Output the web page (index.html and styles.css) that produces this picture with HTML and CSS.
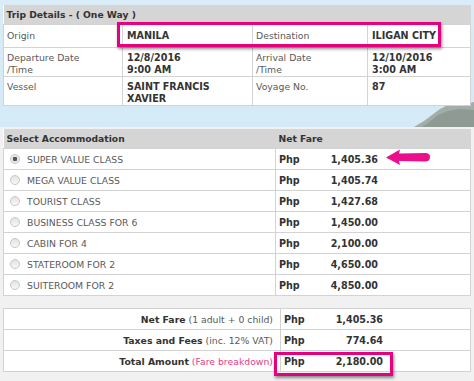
FILE: index.html
```html
<!DOCTYPE html>
<html lang="en">

<head>
    <meta charset="UTF-8">
    <meta name="viewport" content="width=device-width, initial-scale=1.0">
    <title>Trip Details</title>
    <link rel="stylesheet" href="styles.css">
</head>

<body>
    <div class="page">
        <!-- ilha no fundo -->
        <svg class="island" width="60" height="26" viewBox="0 0 60 26">
            <path d="M0 26 L10 20 L18 14 L26 8 L34 4 L44 2 L52 3 L60 1 L60 26 Z" fill="#a3ada8" />
            <path d="M14 22 L24 14 L34 10 L46 8 L60 9 L60 26 L8 26 Z" fill="#86928c" opacity="0.7" />
        </svg>

        <table class="trip">
            <colgroup>
                <col style="width:119px">
                <col style="width:130px">
                <col style="width:115px">
                <col>
            </colgroup>
            <tr>
                <th colspan="4">Trip Details - ( One Way )</th>
            </tr>
            <tr class="r1">
                <td>Origin</td>
                <td class="val">MANILA</td>
                <td>Destination</td>
                <td class="val">ILIGAN CITY</td>
            </tr>
            <tr class="r2">
                <td>Departure Date<br>/Time</td>
                <td class="val">12/8/2016<br>9:00 AM</td>
                <td>Arrival Date<br>/Time</td>
                <td class="val">12/10/2016<br>3:00 AM</td>
            </tr>
            <tr class="r3">
                <td>Vessel</td>
                <td class="val">SAINT FRANCIS<br>XAVIER</td>
                <td>Voyage No.</td>
                <td class="val">87</td>
            </tr>
        </table>

        <table class="accom">
            <tr>
                <th class="name">Select Accommodation</th>
                <th>Net Fare</th>
            </tr>
            <tr>
                <td class="name"><span class="radio checked"></span>SUPER VALUE CLASS</td>
                <td><span class="cur">Php</span><span class="amt">1,405.36</span></td>
            </tr>
            <tr>
                <td class="name"><span class="radio"></span>MEGA VALUE CLASS</td>
                <td><span class="cur">Php</span><span class="amt">1,405.74</span></td>
            </tr>
            <tr>
                <td class="name"><span class="radio"></span>TOURIST CLASS</td>
                <td><span class="cur">Php</span><span class="amt">1,427.68</span></td>
            </tr>
            <tr>
                <td class="name"><span class="radio"></span>BUSINESS CLASS FOR 6</td>
                <td><span class="cur">Php</span><span class="amt">1,450.00</span></td>
            </tr>
            <tr>
                <td class="name"><span class="radio"></span>CABIN FOR 4</td>
                <td><span class="cur">Php</span><span class="amt">2,100.00</span></td>
            </tr>
            <tr>
                <td class="name"><span class="radio"></span>STATEROOM FOR 2</td>
                <td><span class="cur">Php</span><span class="amt">4,650.00</span></td>
            </tr>
            <tr>
                <td class="name"><span class="radio"></span>SUITEROOM FOR 2</td>
                <td><span class="cur">Php</span><span class="amt">4,850.00</span></td>
            </tr>
        </table>

        <table class="summary">
            <tr>
                <td class="label"><b>Net Fare</b> (1 adult + 0 child)</td>
                <td><span class="cur">Php</span><span class="amt">1,405.36</span></td>
            </tr>
            <tr>
                <td class="label"><b>Taxes and Fees</b> (inc. 12% VAT)</td>
                <td><span class="cur">Php</span><span class="amt">774.64</span></td>
            </tr>
            <tr>
                <td class="label"><b>Total Amount</b> <span class="link">(Fare breakdown)</span></td>
                <td><span class="cur">Php</span><span class="amt">2,180.00</span></td>
            </tr>
        </table>

        <!-- destaques -->
        <div class="mark mark-route"></div>
        <div class="mark mark-total"></div>
        <svg class="arrow" width="46" height="16" viewBox="0 0 46 16">
            <path d="M1 8.5 L15 0.5 L14 4.5 L41 4 Q45 4.5 45 8 Q45 12 41 12.5 L14 12 L15 16 Z" fill="#ec0f8c" />
        </svg>
    </div>
</body>

</html>
```

FILE: styles.css
```css
body {
    margin: 0;
    padding: 0;
    font-family: "DejaVu Sans", Verdana, sans-serif;
    font-size: 9.3px;
    color: #595959;
    background: linear-gradient(#d9ecf7 0, #d4eaf6 127px, #f1f1f1 127px);
    width: 474px;
    height: 381px;
    overflow: hidden;
}

.page {
    position: relative;
    padding: 5px 3px 0 3px;
}

.island {
    position: absolute;
    left: 414px;
    top: 101px;
}

table {
    width: 468px;
    border-collapse: collapse;
    background-color: white;
    table-layout: fixed;
    position: relative;
}

th {
    background-color: #d5d5d5;
    color: #333;
    text-align: left;
    font-weight: bold;
    font-size: 9.2px;
    padding: 0 3px;
    height: 19px;
}

td {
    border: 1px solid #d3d3d3;
    padding: 0 3px;
    vertical-align: middle;
}

.trip td {
    vertical-align: top;
    line-height: 12px;
    padding-top: 4px;
}

.trip .r1 td {
    height: 17px;
    padding-top: 5px;
}

.trip .r2 td {
    height: 23px;
}

.trip .r3 td {
    height: 24px;
}

.trip .val {
    font-weight: bold;
    font-size: 9.6px;
    color: #333;
    padding-left: 4px;
}

.accom {
    margin-top: 23px;
}

.accom .name {
    width: 266px;
}

.accom td {
    height: 20px;
}

.radio {
    display: inline-block;
    width: 8px;
    height: 8px;
    border-radius: 50%;
    border: 1px solid #c8c8c8;
    background: linear-gradient(#e2e2e2, #f8f8f8);
    vertical-align: -1px;
    margin: 0 7px 0 3px;
}

.radio.checked {
    background: radial-gradient(circle, #555 0, #555 2px, #e8e8e8 2.5px);
}

.cur {
    display: inline-block;
    width: 20px;
    font-weight: bold;
    font-size: 9.6px;
    color: #333;
}

.amt {
    display: inline-block;
    width: 79px;
    text-align: right;
    font-weight: bold;
    font-size: 9.6px;
    color: #333;
}

.summary {
    margin-top: 12px;
}

.summary td {
    height: 20px;
}

.summary .label {
    width: 266px;
    text-align: right;
    padding-right: 7px;
}

.summary .label b {
    color: #333;
}

.link {
    color: #e0408a;
}

.mark {
    position: absolute;
    border: 3px solid #e5007d;
    box-shadow: 1px 2px 3px rgba(0, 0, 0, 0.45);
}

.mark-route {
    left: 117px;
    top: 22px;
    width: 318px;
    height: 19px;
}

.mark-total {
    left: 274px;
    top: 352px;
    width: 113px;
    height: 18px;
}

.arrow {
    position: absolute;
    left: 385px;
    top: 149px;
}
```
